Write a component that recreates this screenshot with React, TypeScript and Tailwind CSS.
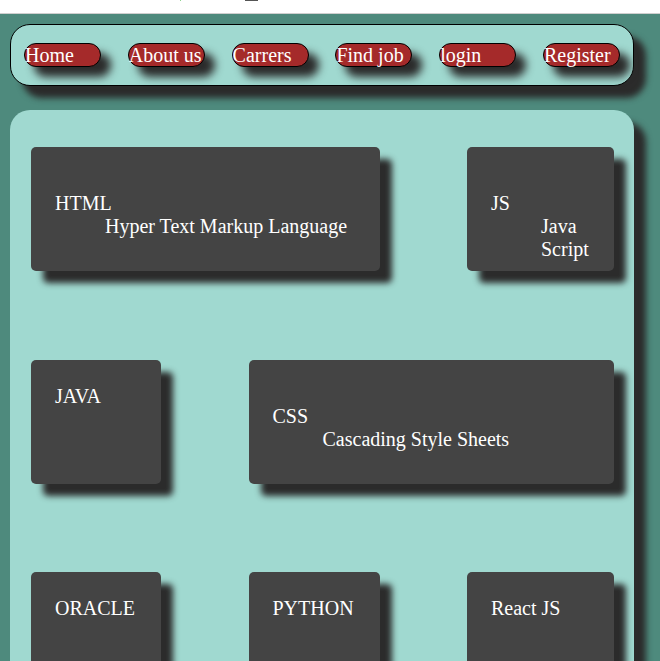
import React from 'react'

const links = ['Home', 'About us', 'Carrers', 'Find job', 'login', 'Register']

const courses = [
  { title: 'HTML', sub: 'Hyper Text Markup Language', span: 'col-span-2' },
  { title: 'JS', sub: 'Java Script', span: 'col-start-3' },
  { title: 'JAVA', sub: '', span: '' },
  { title: 'CSS', sub: 'Cascading Style Sheets', span: 'col-span-2' },
  { title: 'ORACLE', sub: '', span: '' },
  { title: 'PYTHON', sub: '', span: '' },
  { title: 'React JS', sub: '', span: '' },
]

const App = () => {
  return (
    <div className="h-screen overflow-hidden bg-white font-[Liberation_Serif,Times_New_Roman,serif]">
      {/* top strip */}
      <div className="relative h-[14px] border-b border-[#cfcfcf] bg-white">
        <span className="absolute left-[245px] top-0 h-[1px] w-[13px] bg-[#555555]"></span>
        <span className="absolute left-[180px] top-0 h-[1px] w-[1px] bg-[#8fd48f]"></span>
      </div>

      <div className="h-full bg-[#4e8a7d] pt-[10px] pl-[10px] pr-[26px]">
        {/* Navbar */}
        <nav className="flex h-[62px] items-center justify-between rounded-[20px] border border-black bg-[#a0d9d0] px-[13px] shadow-[12px_12px_6px_#2b2b2b]">
          {links.map((l) => (
            <a
              key={l}
              href="#"
              className="block h-[24px] w-[77px] rounded-[12px] border border-black bg-[#a52a2a] text-left text-[20px] leading-[22px] text-white shadow-[10px_10px_8px_#2b2b2b]"
            >
              {l}
            </a>
          ))}
        </nav>

        {/* Course cards */}
        <div className="mt-[24px] rounded-[20px] bg-[#a0d9d0] px-[21px] pt-[37px] pb-[40px] shadow-[12px_12px_6px_#2b2b2b]">
          <div className="grid grid-cols-[130px_131px_147px] auto-rows-[124px] gap-x-[87.5px] gap-y-[88.5px]">
            {courses.map((c) => (
              <div
                key={c.title}
                className={`${c.span} rounded-[5px] bg-[#444444] px-[24px] pt-[25px] text-[20px] leading-[23px] text-white shadow-[12px_12px_6px_#2b2b2b]`}
              >
                {c.sub ? (
                  <div className="mt-[20px]">
                    <div>{c.title}</div>
                    <div className="ml-[50px]">{c.sub}</div>
                  </div>
                ) : (
                  <div>{c.title}</div>
                )}
              </div>
            ))}
          </div>
        </div>
      </div>
    </div>
  )
}

export default App
